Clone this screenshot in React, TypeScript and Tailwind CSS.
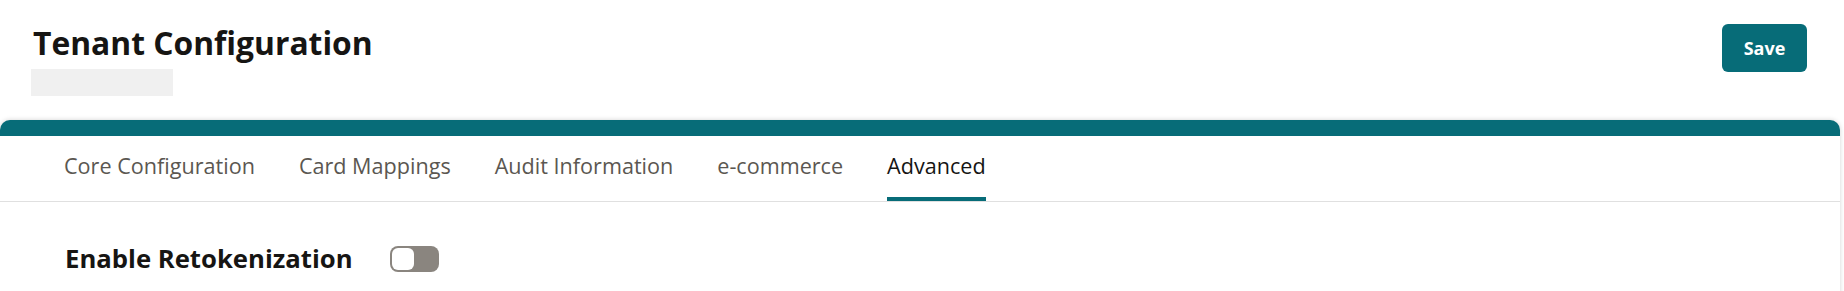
import { useState } from 'react';

const tabs = ['Core Configuration', 'Card Mappings', 'Audit Information', 'e-commerce', 'Advanced'];

export default function App() {
  const [activeTab, setActiveTab] = useState('Advanced');
  const [retokenize, setRetokenize] = useState(false);

  return (
    <div className="w-[1844px] h-[291px] overflow-hidden bg-white font-['Open_Sans',sans-serif]">
      {/* Header */}
      <div className="flex items-start justify-between pl-[31px] pr-[37px] pt-6">
        <div>
          <h1 className="pl-[2px] text-[31.8px] leading-[38px] font-bold text-[#161513]">Tenant Configuration</h1>
          <div className="mt-[7px] h-[27px] w-[142px] bg-[#f0f0f0]" />
        </div>
        <button className="h-12 w-[85px] rounded-md bg-[#076c78] text-[18px] font-bold text-white">
          Save
        </button>
      </div>

      {/* Card */}
      <div className="mt-6 mr-1 h-[400px] rounded-t-[10px] border-t-[16px] border-[#076c78] bg-white shadow-[0_0_5px_rgba(0,0,0,0.18)]">
        <div className="flex gap-11 border-b border-[#e0e0e0] pl-[64px]">
          {tabs.map((tab) => (
            <button
              key={tab}
              onClick={() => setActiveTab(tab)}
              className={
                tab === activeTab
                  ? 'flex h-[65px] items-center border-b-4 border-[#076c78] text-[21.6px] text-[#161513]'
                  : 'flex h-[65px] items-center border-b-4 border-transparent text-[21.6px] text-[#5b5751]'
              }
            >
              {tab}
            </button>
          ))}
        </div>

        <div className="flex items-center gap-[37px] pl-[65px] pt-[39px]">
          <span className="text-[25.7px] leading-[36px] font-bold text-[#161513]">Enable Retokenization</span>
          <button
            onClick={() => setRetokenize(!retokenize)}
            className={
              retokenize
                ? 'flex h-[26px] w-[49px] items-center justify-end rounded-[8px] bg-[#076c78] p-[2px]'
                : 'flex h-[26px] w-[49px] items-center rounded-[8px] bg-[#8a857f] p-[2px]'
            }
          >
            <span className="h-[22px] w-[22px] rounded-[6px] bg-white" />
          </button>
        </div>
      </div>
    </div>
  );
}
